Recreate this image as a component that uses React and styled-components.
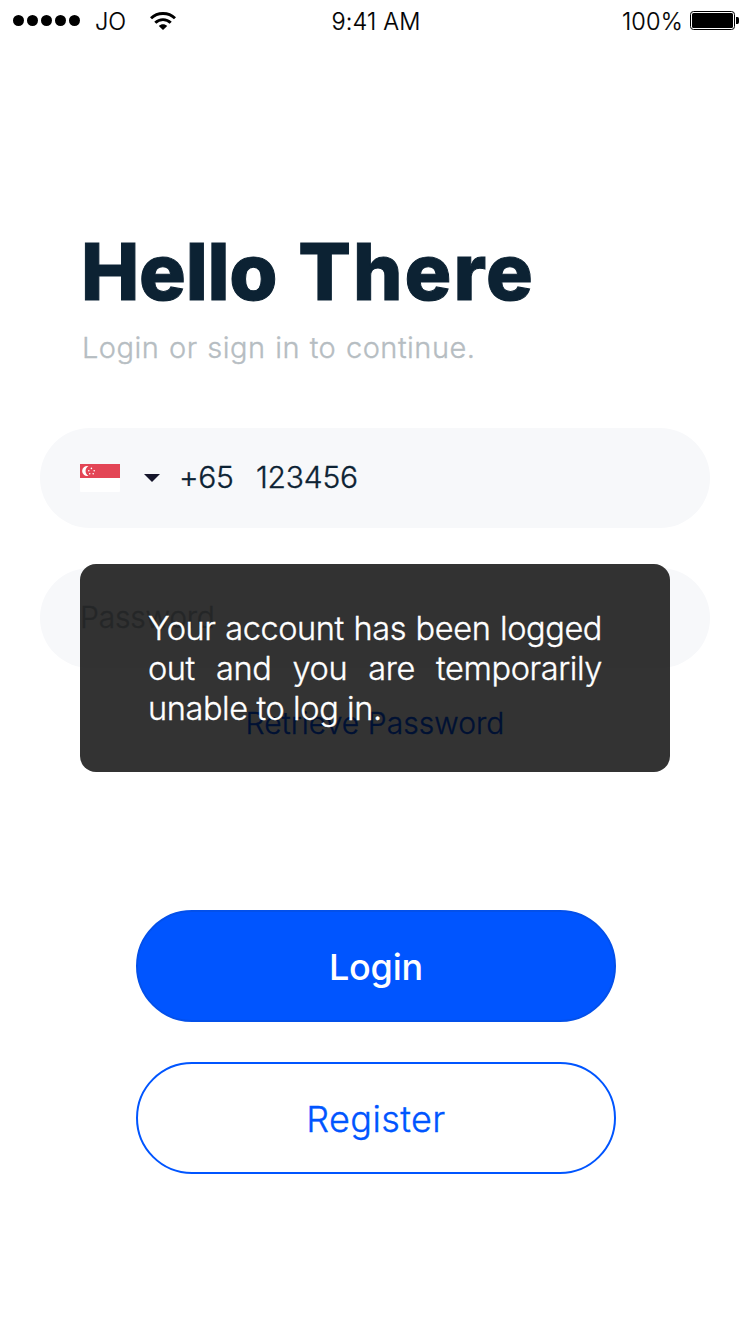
import React from "react";
import styled, { createGlobalStyle } from "styled-components";

const GlobalStyle = createGlobalStyle`
  *, *::before, *::after { box-sizing: border-box; }
  body {
    margin: 0;
    background: #fff;
    font-family: Inter, "Liberation Sans", sans-serif;
  }
  button { font-family: inherit; cursor: pointer; }
`;

const Screen = styled.main`
  position: relative;
  display: flex;
  flex-direction: column;
  width: 750px;
  height: 1334px;
  overflow: hidden;
  background: #fff;
  -webkit-text-stroke: 0.35px currentColor;
`;

const StatusBar = styled.header`
  display: grid;
  grid-template-columns: 1fr auto 1fr;
  align-items: center;
  height: 40px;
  padding: 2px 11px 0 13px;
  color: #000;
  font-size: 23.5px;
  font-weight: 300;
  line-height: 40px;
  white-space: nowrap;
  -webkit-text-stroke-width: 0.2px;
`;

const StatusLeft = styled.div`
  display: flex;
  align-items: center;
`;

const StatusRight = styled.div`
  display: flex;
  align-items: center;
  justify-content: flex-end;
  gap: 7px;
`;

const StatusText = styled.span`
  letter-spacing: ${(p) => p.$spacing || "0"};
`;

const Signal = styled.div`
  display: flex;
  gap: 3px;
  margin: -3px 15px 0 0;
`;

const Dot = styled.span`
  width: 11px;
  height: 11px;
  border-radius: 50%;
  background: #000;
`;

const WifiIcon = styled.svg`
  width: 26px;
  height: 19px;
  margin: -2px 0 0 24px;
`;

const BatteryIcon = styled.svg`
  width: 49px;
  height: 19px;
  margin-top: -3px;
`;

const Heading = styled.section`
  display: flex;
  flex-direction: column;
  padding: 184px 80px 0 82px;
`;

const Title = styled.h1`
  display: flex;
  gap: 21px;
  margin: 0 0 0 -1px;
  color: #0c2233;
  font-size: 78px;
  font-weight: 800;
  line-height: 96px;
  white-space: nowrap;
  -webkit-text-stroke: 1px #0c2233;
`;

const TitleWord = styled.span`
  letter-spacing: ${(p) => p.$spacing};
`;

const Subtitle = styled.p`
  margin: 8px 0 0;
  color: #b6bdc2;
  font-size: 29px;
  font-weight: 300;
  line-height: 40px;
  letter-spacing: 0.5px;
  word-spacing: 1px;
  white-space: nowrap;
  -webkit-text-stroke-color: #b6bdc2;
`;

const Form = styled.form`
  display: flex;
  flex-direction: column;
  gap: 40px;
  padding: 60px 40px 0;
`;

const Field = styled.div`
  display: flex;
  align-items: center;
  height: 100px;
  padding: 0 40px;
  border-radius: 50px;
  background: #f7f8fa;
  color: #0c2233;
  font-size: 30px;
  font-weight: 300;
  white-space: nowrap;
  -webkit-text-stroke-color: #0c2233;
`;

const Flag = styled.svg`
  width: 40px;
  height: 28px;
  margin-top: -1px;
`;

const Caret = styled.svg`
  width: 16px;
  height: 8px;
  margin: 0 19px 0 24px;
`;

const DialCode = styled.span`
  width: 77px;
  margin-top: -2px;
  letter-spacing: -0.3px;
`;

const PhoneNumber = styled.span`
  margin-top: -2px;
  letter-spacing: -0.2px;
`;

const Placeholder = styled.span`
  margin-top: -2px;
  color: #b6bdc2;
  letter-spacing: -0.2px;
  -webkit-text-stroke-color: #b6bdc2;
`;

const RetrieveLink = styled.a`
  align-self: center;
  margin-top: 35px;
  color: #0055ff;
  font-size: 30px;
  font-weight: 300;
  line-height: 40px;
  letter-spacing: 0.05px;
  white-space: nowrap;
  -webkit-text-stroke-color: #0055ff;
`;

const Actions = styled.div`
  display: flex;
  flex-direction: column;
  align-items: center;
  gap: 40px;
  padding: 167px 134px 0 136px;
`;

const ActionButton = styled.button`
  width: 480px;
  height: 112px;
  padding: 1px 0 0;
  border: 2px solid ${(p) => (p.$primary ? "#0350ea" : "#0055ff")};
  border-radius: 56px;
  background: ${(p) => (p.$primary ? "#0055ff" : "#fff")};
  color: ${(p) => (p.$primary ? "#fff" : "#0055ff")};
  font-size: 36px;
  font-weight: ${(p) => (p.$primary ? 500 : 300)};
  letter-spacing: ${(p) => (p.$primary ? "-0.2px" : "0.4px")};
  -webkit-text-stroke: ${(p) => (p.$primary ? "0" : "0.35px #0055ff")};
`;

const Toast = styled.div`
  position: absolute;
  top: 564px;
  left: 80px;
  width: 590px;
  height: 208px;
  padding: 45px 68px 0;
  border-radius: 16px;
  background: rgba(0, 0, 0, 0.8);
  color: #fff;
  font-size: 32.5px;
  font-weight: 300;
  line-height: 40px;
  letter-spacing: -0.4px;
  text-align: justify;
  -webkit-text-stroke-color: #fff;
`;

export default function App() {
  return (
    <Screen>
      <GlobalStyle />
      <StatusBar>
        <StatusLeft>
          <Signal>
            {[0, 1, 2, 3, 4].map((n) => (
              <Dot key={n} />
            ))}
          </Signal>
          <StatusText>JO</StatusText>
          <WifiIcon viewBox="0 0 26 19" fill="none" stroke="#000">
            <path d="M1 6.3C7.5 -0.1 18.5 -0.1 25 6.3" strokeWidth="2.9" />
            <path d="M5.3 10.8C9.5 6.5 16.5 6.5 20.7 10.8" strokeWidth="2.9" />
            <path d="M13 18L8.8 13.9C11.2 11.8 14.8 11.8 17.2 13.9Z" fill="#000" stroke="none" />
          </WifiIcon>
        </StatusLeft>
        <StatusText $spacing="0.15px">9:41 AM</StatusText>
        <StatusRight>
          <StatusText $spacing="0.2px">100%</StatusText>
          <BatteryIcon viewBox="0 0 49 19">
            <rect x="0.5" y="0.5" width="44" height="18" rx="3" fill="none" stroke="#000" />
            <rect x="2" y="2" width="41" height="15" rx="1.5" />
            <path d="M46 6H47.5Q49 6 49 8V11Q49 13 47.5 13H46Z" />
          </BatteryIcon>
        </StatusRight>
      </StatusBar>
      <Heading>
        <Title>
          <TitleWord $spacing="-0.3px">Hello</TitleWord>
          <TitleWord $spacing="2px">There</TitleWord>
        </Title>
        <Subtitle>Login or sign in to continue.</Subtitle>
      </Heading>
      <Form>
        <Field>
          <Flag viewBox="0 0 40 28">
            <rect width="40" height="28" rx="1" fill="#fff" />
            <path d="M0 0H40V14H0Z" fill="#e34555" />
            <path d="M8.5 2.2A5 5 0 1 0 8.5 11.8A5.4 5.4 0 0 1 8.5 2.2Z" fill="#fff" />
            <g fill="#fff">
              <circle cx="11.4" cy="4.4" r="0.8" />
              <circle cx="8.8" cy="6.7" r="0.8" />
              <circle cx="14.2" cy="6.7" r="0.8" />
              <circle cx="9.7" cy="9.8" r="0.8" />
              <circle cx="13.2" cy="9.8" r="0.8" />
            </g>
          </Flag>
          <Caret viewBox="0 0 16 8">
            <path d="M0 0H16L8 8Z" fill="#15152a" />
          </Caret>
          <DialCode>+65</DialCode>
          <PhoneNumber>123456</PhoneNumber>
        </Field>
        <Field>
          <Placeholder>Password</Placeholder>
        </Field>
      </Form>
      <RetrieveLink>Retrieve Password</RetrieveLink>
      <Actions>
        <ActionButton $primary>Login</ActionButton>
        <ActionButton>Register</ActionButton>
      </Actions>
      <Toast role="alert">
        Your account has been logged out and you are temporarily unable to log in.
      </Toast>
    </Screen>
  );
}
